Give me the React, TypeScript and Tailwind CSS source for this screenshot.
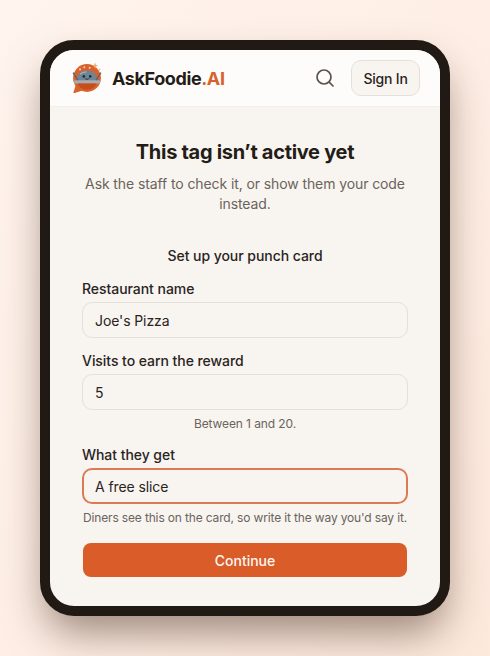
import React from 'react';

const Logo = () => (
  <svg width="30" height="30" viewBox="1.500 0.500 28 28" className="shrink-0">
    <circle cx="15.500" cy="14.500" r="13" fill="#d8622e" />
    <path d="M5 21 L2.500 29 L12 26 Z" fill="#d8622e" />
    <path d="M23 0l.8 2.200 2.200.8-2.200.8-.8 2.200-.8-2.200-2.200-.8 2.200-.8z" fill="#eeb070" />
    <path d="M27 5l.5 1.300 1.300.5-1.300.5-.5 1.300-.5-1.300-1.300-.5 1.300-.5z" fill="#f3c68e" />
    <circle cx="9" cy="6.500" r="1" fill="#f4c9a0" />
    <circle cx="13" cy="4.500" r="1" fill="#f4c9a0" />
    <circle cx="18" cy="5" r="1" fill="#f4c9a0" />
    <path d="M6 17 C6 10.500 10 7.500 15.500 7.500 S25 10.500 25 17 Z" fill="#6f8494" />
    <path d="M9 11c1.500-1.500 3.500-2.200 6-2.200" stroke="#a4b3bd" strokeWidth="1" fill="none" />
    <rect x="3" y="16.500" width="25" height="3.200" rx="1.600" fill="#a3adb3" />
    <path d="M7 19.700h17c-1 3.800-4.500 5.600-8.500 5.600s-7.500-1.800-8.500-5.600z" fill="#c64d1c" />
    <circle cx="12.500" cy="13" r="1.200" fill="#1f2a33" />
    <circle cx="18.500" cy="13" r="1.200" fill="#1f2a33" />
    <path d="M13.800 15c1 .9 2.400 .9 3.400 0" stroke="#1f2a33" strokeWidth="0.800" fill="none" />
    <path d="M2.500 9.500l4.500 7M28.500 9.500l-4.500 7" stroke="#59646d" strokeWidth="1.200" />
  </svg>
);

const Field = ({ label, value, focused }: { label: string; value: string; focused?: boolean }) => (
  <div>
    <div className="text-[14px] leading-[20px] font-medium tracking-[-0.05px] text-[#2a231e] mb-[3px]">{label}</div>
    <div
      className={`h-[36px] rounded-[10px] flex items-center text-[14px] tracking-[-0.1px] text-[#2a231e] ${
        focused ? 'border-2 border-[#dc7a55] px-[11px]' : 'border border-[#e4e0d9] px-[12px]'
      }`}
    >
      {value}
    </div>
  </div>
);

export default function App() {
  return (
    <div
      className="w-[490px] h-[656px] bg-gradient-to-br from-[#fff4ee] to-[#fde8dc] pt-[40px] pl-[40px] overflow-hidden"
      style={{ fontFamily: 'Inter, "Noto Sans", sans-serif' }}
    >
      <div className="w-[410px] h-[576px] rounded-[34px] border-[10px] border-[#211913] bg-[#f8f5f0] overflow-hidden shadow-[0_22px_40px_-6px_rgba(60,35,20,0.5)]">
        <div className="h-[57px] bg-[#fefcfa] border-b border-[#f3efe9] flex items-center justify-between pl-[22px] pr-[20px]">
          <div className="flex items-center gap-[10px]">
            <Logo />
            <div className="text-[18px] font-bold tracking-[-0.4px] text-[#231c17]">
              AskFoodie<span className="text-[#d8602c]">.AI</span>
            </div>
          </div>
          <div className="flex items-center gap-[16px]">
            <svg width="20" height="20" viewBox="0 0 20 20" fill="none" stroke="#5a534c" strokeWidth="1.700" strokeLinecap="round">
              <circle cx="9" cy="9" r="7" />
              <path d="M14.200 14.200L18 18" />
            </svg>
            <div className="w-[69px] h-[36px] rounded-[10px] border border-[#e4e0d9] bg-[#f8f5f0] flex items-center justify-center text-[14px] font-medium tracking-[-0.2px] text-[#2a231e]">
              Sign In
            </div>
          </div>
        </div>
        <div className="px-[32px] pt-[31px]">
          <div className="text-center text-[20px] leading-[28px] font-bold tracking-[-0.3px] text-[#231c17]">
            This tag isn’t active yet
          </div>
          <div className="mt-[8px] text-center text-[14px] leading-[20px] tracking-[-0.1px] text-[#6b635c]">
            Ask the staff to check it, or show them your code instead.
          </div>
          <div className="mt-[32px] text-center text-[14px] leading-[20px] font-medium tracking-[-0.05px] text-[#2a231e]">
            Set up your punch card
          </div>
          <div className="mt-[13px]">
            <Field label="Restaurant name" value="Joe's Pizza" />
          </div>
          <div className="mt-[13px]">
            <Field label="Visits to earn the reward" value="5" />
          </div>
          <div className="mt-[6px] text-center text-[12px] leading-[16px] tracking-[-0.1px] text-[#6b635c]">
            Between 1 and 20.
          </div>
          <div className="mt-[13px]">
            <Field label="What they get" value="A free slice" focused />
          </div>
          <div className="mt-[6px] text-center text-[12px] leading-[16px] tracking-[-0.15px] text-[#6b635c] whitespace-nowrap">
            Diners see this on the card, so write it the way you'd say it.
          </div>
          <div className="mt-[17px] mx-[1px] h-[34px] rounded-[8px] bg-[#d95c29] flex items-center justify-center text-[14px] font-medium text-[#fff8f2]">
            Continue
          </div>
        </div>
      </div>
    </div>
  );
}
